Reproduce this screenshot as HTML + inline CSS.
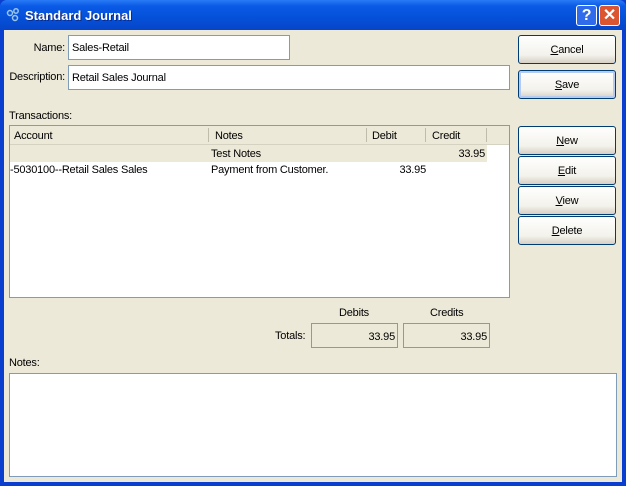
<!DOCTYPE html>
<html><head><style>
body{margin:0;width:626px;height:486px;overflow:hidden;background:#0A3ECF;font-family:"Liberation Sans",sans-serif;font-size:11px;color:#000;letter-spacing:-0.2px}
.a{position:absolute}
#tb{left:0;top:0;width:626px;height:30px;background:linear-gradient(#2A7BF5,#0A5AE6 20%,#0550D8 60%,#0645C8);border-radius:7px 7px 0 0}
#client{left:4px;top:30px;width:618px;height:452px;background:#ECE9D8}
.inp{background:#fff;border:1px solid #7F9DB9;box-sizing:border-box;padding:3px 0 0 3px}
.btn{box-sizing:border-box;border:1px solid #003C74;border-radius:3px;background:linear-gradient(#FFFFFF,#F3F2EC 70%,#D6D0C5);text-align:center;width:98px;height:29px;line-height:28px}
.btn u{text-decoration:underline}
.ro{background:#ECE9D8;border:1px solid #7F9DB9;box-sizing:border-box;text-align:right;padding:7px 2px 0 0}
</style></head><body>
<div id="tb" class="a"></div>
<svg class="a" style="left:6px;top:8px" width="16" height="14" viewBox="0 0 16 14"><circle cx="4" cy="5" r="2.5" fill="none" stroke="#9BC6E8" stroke-width="1.5"/><circle cx="10" cy="3" r="2.2" fill="none" stroke="#9BC6E8" stroke-width="1.5"/><circle cx="9" cy="10" r="2.5" fill="none" stroke="#9BC6E8" stroke-width="1.5"/></svg>
<div class="a" style="left:25px;top:8px;color:#fff;font-weight:bold;font-size:13px;text-shadow:1px 1px #0A2A8A;letter-spacing:0">Standard Journal</div>
<div class="a" style="left:576px;top:5px;width:21px;height:21px;box-sizing:border-box;border:1px solid #fff;border-radius:3px;background:#2F6BEA;color:#fff;font-weight:bold;font-size:16px;text-align:center;line-height:20px">?</div>
<div class="a" style="left:599px;top:5px;width:21px;height:21px;box-sizing:border-box;border:1px solid #fff;border-radius:3px;background:#DA5530;color:#fff;font-weight:bold;font-size:16px;text-align:center;line-height:19px">✕</div>
<div id="client" class="a"></div>
<div class="a" style="left:0;width:65px;text-align:right;top:42px">Name:</div>
<div class="a inp" style="left:68px;top:35px;width:222px;height:25px;padding-top:6px">Sales-Retail</div>
<div class="a" style="left:0;width:65px;text-align:right;top:71px">Description:</div>
<div class="a inp" style="left:68px;top:65px;width:442px;height:25px;padding-top:6px">Retail Sales Journal</div>
<div class="a btn" style="left:518px;top:35px"><u>C</u>ancel</div>
<div class="a btn" style="left:518px;top:70px;box-shadow:inset 0 0 0 2px #B7CBF0"><u>S</u>ave</div>
<div class="a" style="left:9px;top:110px">Transactions:</div>
<div class="a" style="left:9px;top:125px;width:501px;height:173px;background:#fff;border:1px solid #7F9DB9;box-sizing:border-box"></div>
<div class="a" style="left:10px;top:126px;width:499px;height:19px;background:#ECE9D8;border-bottom:1px solid #D6D2C2;box-sizing:border-box"></div>
<div class="a" style="left:208px;top:128px;width:1px;height:14px;background:#C0BCAC"></div>
<div class="a" style="left:366px;top:128px;width:1px;height:14px;background:#C0BCAC"></div>
<div class="a" style="left:425px;top:128px;width:1px;height:14px;background:#C0BCAC"></div>
<div class="a" style="left:486px;top:128px;width:1px;height:14px;background:#C0BCAC"></div>
<div class="a" style="left:14px;top:130px">Account</div>
<div class="a" style="left:215px;top:130px">Notes</div>
<div class="a" style="left:372px;top:130px">Debit</div>
<div class="a" style="left:432px;top:130px">Credit</div>
<div class="a" style="left:10px;top:145px;width:477px;height:17px;background:#ECE9D8"></div>
<div class="a" style="left:211px;top:148px">Test Notes</div>
<div class="a" style="left:440px;top:148px;width:45px;text-align:right">33.95</div>
<div class="a" style="left:10px;top:164px">-5030100--Retail Sales Sales</div>
<div class="a" style="left:211px;top:164px">Payment from Customer.</div>
<div class="a" style="left:380px;top:164px;width:46px;text-align:right">33.95</div>
<div class="a btn" style="left:518px;top:126px"><u>N</u>ew</div>
<div class="a btn" style="left:518px;top:156px"><u>E</u>dit</div>
<div class="a btn" style="left:518px;top:186px"><u>V</u>iew</div>
<div class="a btn" style="left:518px;top:216px"><u>D</u>elete</div>
<div class="a" style="left:339px;top:307px">Debits</div>
<div class="a" style="left:430px;top:307px">Credits</div>
<div class="a" style="left:275px;top:330px">Totals:</div>
<div class="a ro" style="left:311px;top:323px;width:87px;height:25px">33.95</div>
<div class="a ro" style="left:403px;top:323px;width:87px;height:25px">33.95</div>
<div class="a" style="left:9px;top:357px">Notes:</div>
<div class="a" style="left:9px;top:373px;width:608px;height:104px;background:#fff;border:1px solid #7F9DB9;box-sizing:border-box"></div>
</body></html>
